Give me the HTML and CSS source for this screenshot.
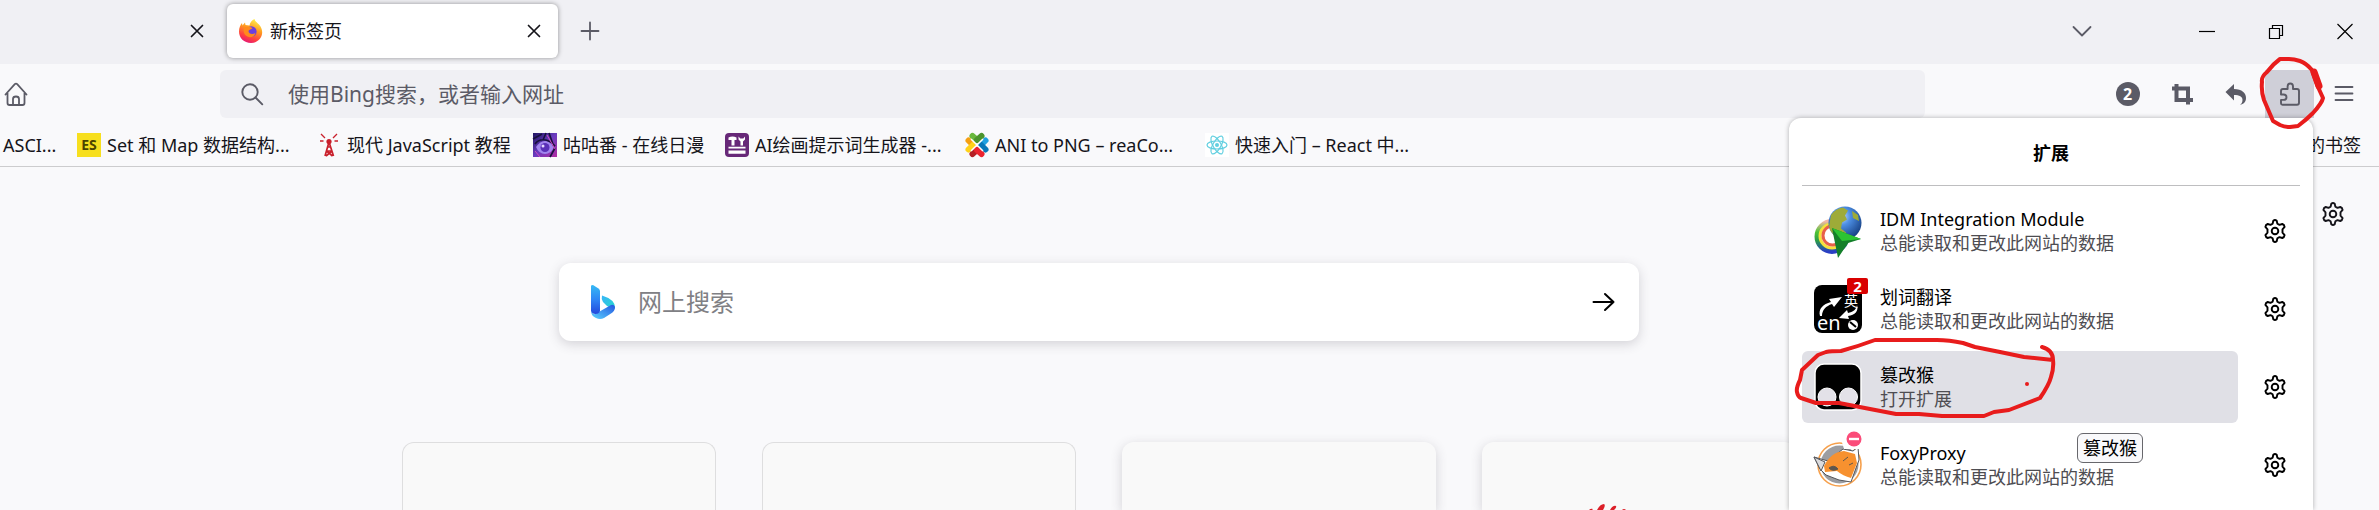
FILE: index.html
```html
<!DOCTYPE html>
<html lang="zh-CN">
<head>
<meta charset="utf-8">
<title>新标签页</title>
<link rel="stylesheet" href="styles.css">
</head>
<body>
<svg class="defs" width="0" height="0" aria-hidden="true">
  <defs>
    <symbol id="gear" viewBox="0 0 24 24">
      <g fill="none" stroke="currentColor" stroke-width="1.900" stroke-linejoin="round">
        <path d="M10.300 1.800Q12 .4 13.700 1.800L14.400 4.700 16.500 5.900 19.300 5Q21.300 5.700 21.600 7.900L19.500 10.300V13.700L21.600 16.100Q21.300 18.300 19.300 19L16.500 18.100 14.400 19.300 13.700 22.200Q12 23.600 10.300 22.200L9.600 19.300 7.500 18.100 4.700 19Q2.700 18.300 2.400 16.100L4.500 13.700V10.300L2.400 7.900Q2.700 5.700 4.700 5L7.500 5.900 9.600 4.700z"/>
        <circle cx="12" cy="12" r="3.300"/>
      </g>
    </symbol>
    <symbol id="cross" viewBox="0 0 24 24"><path d="M6.500 6.500l11 11M17.500 6.500l-11 11" fill="none" stroke="currentColor" stroke-width="1.700" stroke-linecap="round"/></symbol>
    <linearGradient id="fox" x1=".7" y1="0" x2=".3" y2="1"><stop offset="0" stop-color="#fff44f"/><stop offset=".4" stop-color="#ff9a20"/><stop offset=".75" stop-color="#ff4040"/><stop offset="1" stop-color="#e3157a"/></linearGradient>
    <linearGradient id="bingA" x1="0" y1="0" x2="0" y2="1"><stop offset="0" stop-color="#36baf4"/><stop offset=".5" stop-color="#2f86f5"/><stop offset="1" stop-color="#2348dc"/></linearGradient>
    <linearGradient id="bingB" x1="0" y1="1" x2="1" y2="0"><stop offset="0" stop-color="#5bd5ff"/><stop offset="1" stop-color="#2455e0"/></linearGradient>
    <linearGradient id="bingC" x1="0" y1="0" x2="1" y2="1"><stop offset="0" stop-color="#38b4f8"/><stop offset="1" stop-color="#24dcc8"/></linearGradient>
    <radialGradient id="globe" cx=".4" cy=".3" r=".75"><stop offset="0" stop-color="#c4dcf8"/><stop offset=".35" stop-color="#4d8fe4"/><stop offset="1" stop-color="#123a7c"/></radialGradient>
    <linearGradient id="anime" x1="0" y1="0" x2="1" y2="1"><stop offset="0" stop-color="#1e1460"/><stop offset=".5" stop-color="#6a3cc0"/><stop offset="1" stop-color="#b22aa0"/></linearGradient>
    <linearGradient id="ring" x1="0" y1="0" x2="0" y2="1"><stop offset="0" stop-color="#f2b8a8"/><stop offset=".35" stop-color="#4fc435"/><stop offset=".65" stop-color="#2a9a4a"/><stop offset="1" stop-color="#2a3fc4"/></linearGradient>
  </defs>
</svg>

<header class="browser">
  <div class="tabbar">
    <div class="tab tab-previous"><button class="icon-btn" aria-label="关闭标签页"><svg class="i24"><use href="#cross"/></svg></button></div>
    <div class="tab tab-active">
      <svg class="i24" viewBox="0 0 24 24"><path d="M12 24C5 24 0 19 0 12.500 0 8.500 1.500 6 3 4l.5 2.500L6 3.500l.5 2.500 4 .5C11 3.500 13 1 15.500 0c.5 3 4 4 6 7.500C26 15 21 24 12 24z" fill="url(#fox)"/><circle cx="12.300" cy="12.500" r="5.300" fill="#6b3fe0"/><path d="M5 9c3-2 6-1 8.500 0-1 1.500-3.500 1.500-4 3 0 3 4 4 7 2-1 4-5 5-8 3.500C5 16 4 12 5 9z" fill="#ff8a1c"/></svg>
      <span class="tab-title">新标签页</span>
      <button class="icon-btn" aria-label="关闭标签页"><svg class="i24"><use href="#cross"/></svg></button>
    </div>
    <button class="icon-btn new-tab" aria-label="新建标签页"><svg class="i24" viewBox="0 0 24 24"><path d="M12 3.500v17M3.500 12h17" stroke="#5b5b66" stroke-width="1.800" stroke-linecap="round"/></svg></button>
    <div class="window-controls">
      <button class="icon-btn list-tabs" aria-label="列出所有标签页"><svg class="i24" viewBox="0 0 24 24"><path d="M3.500 8l8.500 8.500L20.500 8" fill="none" stroke="#5b5b66" stroke-width="1.800" stroke-linecap="round" stroke-linejoin="round"/></svg></button>
      <button class="icon-btn" aria-label="最小化"><svg class="i24" viewBox="0 0 24 24"><path d="M4 12.500h16" stroke="#000" stroke-width="1.200"/></svg></button>
      <button class="icon-btn" aria-label="还原"><svg class="i24" viewBox="0 0 24 24"><path d="M5.500 9.500h10v10h-10zM8.500 9.500v-3h10v10h-3" fill="none" stroke="#000" stroke-width="1.200"/></svg></button>
      <button class="icon-btn" aria-label="关闭"><svg class="i24" viewBox="0 0 24 24"><path d="M4.500 5l15 15M19.500 5l-15 15" stroke="#000" stroke-width="1.200"/></svg></button>
    </div>
  </div>

  <div class="navbar">
    <button class="icon-btn home" aria-label="主页"><svg class="i24" viewBox="0 0 24 24"><path d="M1.500 12.500L10.800 2.200q1.200-1.200 2.400 0l9.300 10.300M3.500 11v10q0 2 2 2h13q2 0 2-2V11M9 22.500V17q0-2.500 3-2.500t3 2.500v5.500" fill="none" stroke="#5b5b66" stroke-width="1.800" stroke-linecap="round"/></svg></button>
    <label class="urlbar">
      <svg class="i24" viewBox="0 0 24 24"><circle cx="10" cy="10" r="7.700" fill="none" stroke="#5b5b66" stroke-width="1.900"/><path d="M15.500 15.500l6.800 6.800" stroke="#5b5b66" stroke-width="1.900" stroke-linecap="round"/></svg>
      <input class="url-input" type="text" aria-label="地址栏" placeholder="使用Bing搜索，或者输入网址">
    </label>
    <div class="tools">
      <button class="tool" aria-label="计数"><span class="count">2</span></button>
      <button class="tool" aria-label="截图"><svg class="i24" viewBox="0 0 24 24"><path d="M2 6.500h16v16M6.500 2v16H23" fill="none" stroke="#5b5b66" stroke-width="4"/></svg></button>
      <button class="tool" aria-label="撤销"><svg class="i24" viewBox="0 0 24 24"><path d="M10 2v5c8 0 12 4 12 9 0 4-2.500 6-6 7 1.500-1 2.500-3 2.500-5 0-3.500-3-5-8.500-5v5.500L1.500 10z" fill="#5b5b66"/></svg></button>
      <button class="tool tool-open" aria-label="扩展"><svg class="i24" viewBox="0 0 24 24"><path d="M4.500 22.800h14.500q2 0 2-2V9q0-2-2-2h-4V4.500q0-3-2.700-3T9.600 4.500V7H5Q3 7 3 9v3.500h2.500q3 0 3 2.700t-3 2.700H3v3.400q0 1.500 1.500 1.500z" fill="none" stroke="#5b5b66" stroke-width="1.900" stroke-linejoin="round"/></svg></button>
      <button class="tool" aria-label="菜单"><svg class="i24" viewBox="0 0 24 24"><path d="M3.500 5h17M3.500 11.500h17M3.500 18h17" stroke="#5b5b66" stroke-width="1.800" stroke-linecap="round"/></svg></button>
    </div>
  </div>

  <nav class="bookmarks">
    <a class="bookmark b-ascii" href="#">ASCI...</a>
    <a class="bookmark b-es" href="#"><span class="es">ES</span>Set 和 Map 数据结构...</a>
    <a class="bookmark b-js" href="#"><svg class="i24" viewBox="0 0 24 24"><path d="M12 9L8 23M12 9l4.500 14M10.500 14h3.500M9 18h6.500M9.500 18l6 5M15 18l-6 5" fill="none" stroke="#c9202c" stroke-width="1.700"/><circle cx="12" cy="8.500" r="2.600" fill="#c9202c"/><path d="M8 5L4 1M6.500 8H3M16 5l4-4M17.500 8H21" stroke="#c9202c" stroke-width="1.300"/></svg>现代 JavaScript 教程</a>
    <a class="bookmark b-gugu" href="#"><svg class="i24" viewBox="0 0 24 24"><path d="M0 0h24v24H0z" fill="url(#anime)"/><path d="M3 14q4-6 9-6t9 6q-3 7-9 7t-9-7z" fill="#a184ee"/><circle cx="12" cy="14.500" r="4.500" fill="#5a30b8"/><circle cx="10" cy="13" r="1.500" fill="#e4d8ff"/><path d="M2 11c4-6 13-6 20 2M0 6L9 1M16 0l5 14M13 0l-3 7M22 15l-5 9" fill="none" stroke="#17103c" stroke-width="1.600"/><path d="M14 2l8 14M2 18l5 6" stroke="#d04cc0" stroke-width="1"/></svg>咕咕番 - 在线日漫</a>
    <a class="bookmark b-ai" href="#"><svg class="i24" viewBox="0 0 24 24"><rect width="24" height="24" rx="4" fill="#672878"/><path d="M3.500 4.500q4-2 8 0V7h-2v5.500h-3V7h-3zM13.500 3.500v3l2 2v4H18v-4l2-2v-3l-1.700 2h-3z" fill="#fff"/><path d="M3.500 13.700h17v1.800h-17zM3.500 17.500h17v3.300h-17z" fill="#fff"/></svg>AI绘画提示词生成器 -...</a>
    <a class="bookmark b-ani" href="#"><svg class="i24" viewBox="0 0 24 24"><g stroke-width="6" stroke-linecap="round"><path d="M7.500 3L12 7" stroke="#69b83d"/><path d="M16.500 3L12 7" stroke="#4b942d"/><path d="M3.500 7.500L8 12" stroke="#f5a012"/><path d="M8 12l-4.500 4.500" stroke="#ffd21a"/><path d="M20.500 7.500L16 12" stroke="#1fa0e0"/><path d="M16 12l4.500 4.500" stroke="#0877b8"/><path d="M12 17l-4.500 4" stroke="#b42025"/><path d="M12 17l4.500 4" stroke="#ec2430"/></g><path d="M6 6l12 12M18 6L6 18" stroke="#fff" stroke-width="1.500"/></svg>ANI to PNG – reaCo...</a>
    <a class="bookmark b-react" href="#"><svg class="i24" viewBox="0 0 24 24"><path d="M0 0h24v24H0z" fill="#fff"/><g fill="none" stroke="#61cfe0" stroke-width="1.200"><ellipse cx="12" cy="12" rx="10" ry="4"/><ellipse cx="12" cy="12" rx="10" ry="4" transform="rotate(60 12 12)"/><ellipse cx="12" cy="12" rx="10" ry="4" transform="rotate(120 12 12)"/></g><circle cx="12" cy="12" r="2" fill="#61cfe0"/></svg>快速入门 – React 中...</a>
    <a class="bookmark b-mobile" href="#">移动设备上的书签</a>
  </nav>
</header>

<main class="page">
  <button class="icon-btn settings" aria-label="个性化设置"><svg class="i24"><use href="#gear"/></svg></button>
  <form class="search">
    <svg class="bing" viewBox="0 0 24 34"><path d="M12 17q-2-3-1-6.500 13 4 13 12-1 3-3 4-1-4-5-5.500z" fill="url(#bingC)"/><path d="M0 26q2 5 6 2l14-8q3-1 4 2 0 4-4 6.500L13 33q-4 2-8 0-5-2-5-7z" fill="url(#bingB)"/><path d="M0 1q0-1 2-1l5.500 3.500Q9 4.500 9 6v20q-1 3-4.500 3T0 26z" fill="url(#bingA)"/></svg>
    <input class="search-input" type="text" aria-label="网上搜索" placeholder="网上搜索">
    <button class="icon-btn" type="button" aria-label="搜索"><svg class="i24" viewBox="0 0 24 24"><path d="M2.500 12h20M14 4l8.500 8-8.500 8" fill="none" stroke="#000" stroke-width="2" stroke-linecap="round" stroke-linejoin="round"/></svg></button>
  </form>
  <div class="tiles">
    <div class="tile outlined"></div>
    <div class="tile outlined"></div>
    <div class="tile"></div>
    <div class="tile"><svg class="petals" viewBox="0 0 120 6"><g fill="#dc2029"><path d="M10 6q2-2 4-1l-1 1zM18 6q3-6 7-6 2 1-1 6zM31 6q3-5 6-4 1 1-2 4zM43 6q2-2 4 0z"/></g></svg></div>
  </div>
</main>

<section class="panel" aria-label="扩展">
  <h1 class="panel-title">扩展</h1>
  <ul class="extensions">
    <li class="ext">
      <button class="ext-main">
        <svg class="i48" viewBox="0 0 48 48"><circle cx="17.500" cy="29" r="8" fill="#fff"/><g fill="none"><circle cx="18" cy="29.500" r="15" stroke="url(#ring)" stroke-width="5"/><circle cx="18" cy="29" r="12" stroke="#f6e13c" stroke-width="3"/><circle cx="18.500" cy="28.500" r="9.500" stroke="#e8604a" stroke-width="3"/></g><circle cx="31" cy="16" r="16.500" fill="url(#globe)"/><path d="M17 8q5-7 12-7.500l5 3-3 5 2 4-5 3-1 6 5 4-3 6q-12-2-14-12zM38 4l6 4 1 6-6-3z" fill="#9eab38"/><path d="M18 21l29 11-13 4-10 15z" fill="#14802a"/><path d="M18 21l29 11-19 2z" fill="#2cc433"/></svg>
        <span class="ext-text"><span class="ext-name">IDM Integration Module</span><span class="ext-note">总能读取和更改此网站的数据</span></span>
      </button>
      <button class="icon-btn gear" aria-label="管理 IDM Integration Module"><svg class="i24"><use href="#gear"/></svg></button>
    </li>
    <li class="ext">
      <button class="ext-main">
        <span class="ext-icon">
          <svg class="i48" viewBox="0 0 48 48"><rect width="48" height="48" rx="8" fill="#000"/><path d="M6 31c-2-7 3-12 11-14l-2-3 13-2-8 10-2-3c-6 2-10 6-10 12zM43 20c2 6-2 10-9 11l1 3-10-1 8-8 1 3c5-1 8-3 9-8z" fill="#fff"/><circle cx="39" cy="40" r="5" fill="#fff"/><path d="M36 37l6 5" stroke="#000" stroke-width="2"/><text x="3" y="45" class="glyph-en">en</text><text x="30" y="21" class="glyph-ying">英</text></svg>
          <span class="badge">2</span>
        </span>
        <span class="ext-text"><span class="ext-name">划词翻译</span><span class="ext-note">总能读取和更改此网站的数据</span></span>
      </button>
      <button class="icon-btn gear" aria-label="管理 划词翻译"><svg class="i24"><use href="#gear"/></svg></button>
    </li>
    <li class="ext">
      <button class="ext-main hovered">
        <svg class="i48" viewBox="0 0 48 48"><rect x="1" y="1" width="46" height="46" rx="9" fill="#000" stroke="#fff" stroke-width="1.500"/><circle cx="13" cy="34" r="9" fill="#e3e1e8" stroke="#fff"/><circle cx="34.500" cy="34" r="9" fill="#e3e1e8" stroke="#fff"/></svg>
        <span class="ext-text"><span class="ext-name">篡改猴</span><span class="ext-note">打开扩展</span></span>
      </button>
      <button class="icon-btn gear" aria-label="管理 篡改猴"><svg class="i24"><use href="#gear"/></svg></button>
    </li>
    <li class="ext">
      <button class="ext-main">
        <svg class="i48" viewBox="0 0 48 48"><circle cx="25.500" cy="23.500" r="21.500" fill="#fff" stroke="#f6a04c" stroke-width="1.600"/><circle cx="25.500" cy="23.500" r="19" fill="#9c9da1"/><path d="M0 16l14 4 15-12 10 2 5-4 1 13-3 8-5 14-12-2-13-5-6-6z" fill="#fff" stroke="#55565a"/><path d="M10 25q7-14 20-15l11 3 2 9-6 15q-8-2-14-7l-12 1z" fill="#f7912f"/><path d="M0 16l11 5-4 9z" fill="#dcdcde" stroke="#55565a"/><path d="M15 27q5-4 9 1-6 3-9-1zM29 20l5-4M35 24l4-2" fill="#5d564e" stroke="#5d564e"/><path d="M27-2h19l7 7q2 3-2 3H30z" fill="#fff"/><circle cx="40" cy="-2" r="7.500" fill="#fb4c79"/><path d="M35-2h10" stroke="#fff" stroke-width="2.400"/></svg>
        <span class="ext-text"><span class="ext-name">FoxyProxy</span><span class="ext-note">总能读取和更改此网站的数据</span></span>
      </button>
      <button class="icon-btn gear" aria-label="管理 FoxyProxy"><svg class="i24"><use href="#gear"/></svg></button>
    </li>
  </ul>
  <div class="tooltip" role="tooltip">篡改猴</div>
  <svg class="ink" viewBox="0 0 524 392" aria-hidden="true"><g fill="none" stroke="#e81c1c" stroke-width="4" stroke-linecap="round" stroke-linejoin="round"><path d="M500-59L491-59Q484-54 478-46 472-41 473-36 472-27 475-18L484 3 491 7Q496 9 501 9L509 8Q517 2 524-5 533-15 534-20L529-31 523-48 Q517-55 511-57 505-59 500-59z"/><path d="M525-46l5 14" stroke-width="7"/><path d="M264 242L235 239 211 234 186 229 174 225Q160 222 148 222H86Q70 228 52 233 42 233 37 234L29 237 13 252 11 262Q7 270 8 274 9 279 12 280L27 285 50 285 81 291 107 296 130 296 153 298 195 298 205 294 220 292 251 280Q260 267 262 259 265 250 264 242 264 232 253 229"/></g><circle cx="238" cy="266" r="2" fill="#e81c1c"/></svg>
</section>
</body>
</html>
```

FILE: styles.css
```css
* { box-sizing: border-box; }

body {
  margin: 0;
  position: relative;
  height: 100vh;
  overflow: hidden;
  display: flex;
  flex-direction: column;
  background: #f9f9fb;
  color: #15141a;
  font: 18px/24px "Noto Sans", "Noto Sans CJK SC", sans-serif;
}

button, input { font: inherit; color: inherit; border: 0; padding: 0; background: none; outline: 0; }
svg { display: block; flex: none; overflow: visible; }
.defs { position: absolute; }
.i24 { width: 24px; height: 24px; }
.i48 { width: 48px; height: 48px; }
.icon-btn { display: grid; place-items: center; flex: none; width: 24px; height: 24px; }

.tabbar { display: flex; align-items: center; height: 64px; padding: 0 22px 2px 0; background: #f0f0f4; }
.tab { display: flex; align-items: center; height: 54px; }
.tab-previous { width: 227px; justify-content: flex-end; padding-right: 18px; }
.tab-active { width: 331px; gap: 7px; padding: 0 12px; border-radius: 6px; background: #fff; box-shadow: 0 0 5px rgba(0, 0, 0, .4); }
.tab-title { flex: 1; }
.new-tab { margin-left: 20px; }
.window-controls { display: flex; gap: 45px; margin-left: auto; }
.list-tabs { margin-right: 56px; }

.navbar { display: flex; align-items: center; height: 60px; padding: 0 11px 0 4px; }
.urlbar { display: flex; align-items: center; flex: 1; gap: 24px; height: 48px; margin: 0 178px 0 192px; padding: 0 20px; border-radius: 6px; background: #f0f0f4; }
.url-input { flex: 1; font-size: 21px; line-height: 30px; }
.url-input::placeholder { color: #5b5b66; opacity: 1; }
.tools { display: flex; gap: 5px; }
.tool { display: grid; place-items: center; width: 49px; height: 48px; }
.tool-open { background: #cfcfd8; }
.count { width: 24px; height: 24px; border-radius: 50%; background: #5b5b66; color: #fff; font-size: 16px; font-weight: 700; line-height: 24px; }

.bookmarks { display: flex; align-items: center; height: 43px; padding: 0 18px 0 3px; border-bottom: 1px solid #ccccce; white-space: nowrap; }
.bookmark { display: flex; align-items: center; gap: 6px; color: inherit; text-decoration: none; }
.b-ascii { width: 74px; }
.b-es { width: 240px; }
.b-js { width: 216px; }
.b-gugu { width: 192px; }
.b-ai { width: 240px; }
.b-ani { width: 240px; }
.b-mobile { margin-left: auto; }
.es { width: 24px; height: 24px; background: #f7df1e; color: #4c4400; font-size: 14px; font-weight: 700; text-align: center; }

.page { flex: 1; min-height: 0; display: flex; flex-direction: column; align-items: center; padding: 35px 181px 0 0; }
.settings { align-self: flex-end; margin-right: -147px; color: #15141a; }
.search { display: flex; align-items: center; gap: 23px; width: 1080px; height: 78px; margin-top: 37px; padding: 0 24px 0 32px; border-radius: 12px; background: #fff; box-shadow: 0 3px 12px rgba(58, 57, 68, .2); flex: none; }
.bing { width: 24px; height: 34px; }
.search-input { flex: 1; font-size: 24px; line-height: 36px; }
.search-input::placeholder { color: #808084; opacity: 1; }
.tiles { display: flex; flex: 1; gap: 46px; margin-top: 101px; }
.tile { display: flex; align-items: flex-end; justify-content: center; width: 314px; border-radius: 12px 12px 0 0; background: #f9f9f9; box-shadow: 0 3px 12px rgba(58, 57, 68, .2); }
.outlined { border: 1px solid #dededf; border-bottom: 0; box-shadow: none; }
.petals { width: 120px; height: 6px; }

.panel { position: absolute; top: 118px; right: 66px; bottom: 0; width: 524px; padding: 0 13px; border-radius: 12px 12px 0 0; background: #fff; color: #000; box-shadow: 0 0 5px rgba(0, 0, 0, .3); }
.panel-title { margin: 0 0 9px; padding: 23px 0 20px; border-bottom: 1px solid #bebec0; font-size: 18px; line-height: 24px; text-align: center; }
.extensions { display: grid; gap: 6px; margin: 0; padding: 0; list-style: none; }
.ext { display: flex; align-items: center; gap: 25px; }
.ext-main { display: flex; align-items: center; flex: 1; gap: 18px; height: 72px; padding: 0 12px; border-radius: 6px; text-align: left; }
.hovered { background: #e0e0e6; }
.ext-text { display: grid; }
.ext-note { color: #4e4d52; }
.gear { margin-right: 13px; }
.ext-icon { position: relative; }
.badge { position: absolute; top: -7px; right: -6px; width: 21px; height: 16px; border-radius: 2px; background: #d90000; color: #fff; font-size: 15px; font-weight: 700; line-height: 16px; text-align: center; }
.glyph-en { font-size: 20px; fill: #fff; }
.glyph-ying { font-size: 14px; fill: #fff; }
.tooltip { position: absolute; top: 315px; left: 288px; padding: 2px 5px; border: 1px solid #67676c; border-radius: 6px; background: #f9f9fb; }
.ink { position: absolute; top: 0; left: 0; width: 524px; height: 392px; pointer-events: none; }
```
